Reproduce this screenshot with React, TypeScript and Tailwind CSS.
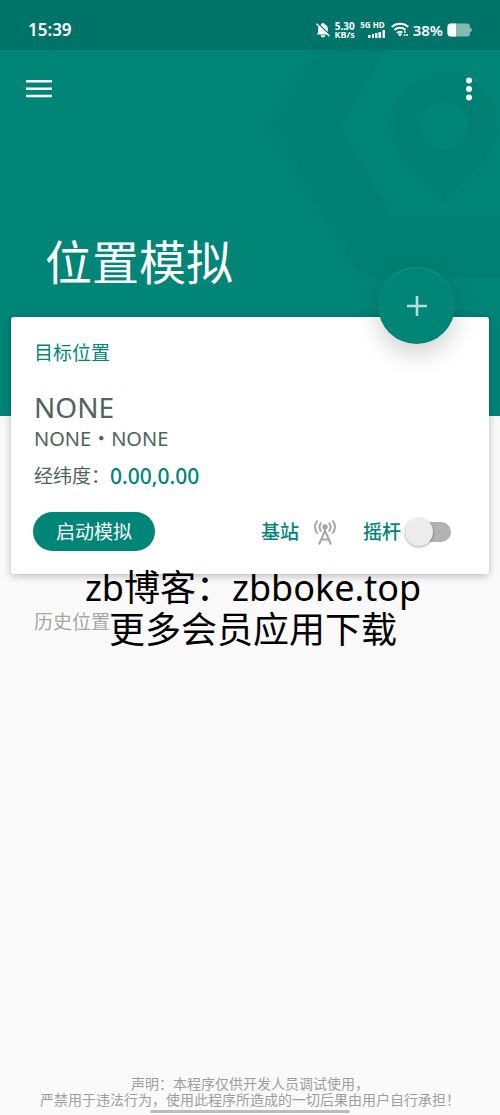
import { useState } from 'react'

function HeaderArt() {
  return (
    <svg className="absolute right-0 top-0 h-[416px] w-[250px]" viewBox="250 0 250 416" fill="none" aria-hidden="true">
      <defs>
        <linearGradient id="edge" gradientUnits="userSpaceOnUse" x1="283" y1="170" x2="299" y2="161">
          <stop offset="0" stopColor="#008072" stopOpacity="0" />
          <stop offset="1" stopColor="#008072" />
        </linearGradient>
        <linearGradient id="edgeTop" gradientUnits="userSpaceOnUse" x1="283" y1="84" x2="299" y2="93">
          <stop offset="0" stopColor="#008072" stopOpacity="0" />
          <stop offset="1" stopColor="#008072" />
        </linearGradient>
      </defs>
      <path d="M264 127h77l52 89h107v62H368q-10 0-15-9z" fill="url(#edge)" />
      <path d="M309 50h77l-45 77h-77z" fill="url(#edgeTop)" />
      <path d="M444 202l-39-39a54 54 0 1 1 78 0zM444 101a24 24 0 1 0 0 48 24 24 0 0 0 0-48z" fill="#008072" fillRule="evenodd" />
    </svg>
  )
}

function StatusBar() {
  return (
    <div className="relative flex h-[50px] items-center justify-between bg-black/12 pl-7 pr-[27px] pt-[9px] text-white">
      <span className="text-[17px] leading-5 font-semibold">15:39</span>
      <div className="flex items-center">
        <svg className="h-4 w-4" viewBox="0 0 16 16" aria-hidden="true">
          <path d="M8 1a1.500 1.500 0 0 1 1.500 1.300A4.800 4.800 0 0 1 12.800 7v3.400L14.200 12.500H1.800l1.400-2.100V7a4.800 4.800 0 0 1 3.300-4.700A1.500 1.500 0 0 1 8 1zM5.800 13.200h4.400a2.200 2.200 0 0 1-4.400 0z" fill="#fff" />
          <path d="M2.500 1l13 12.500" stroke="#007569" strokeWidth="1.500" />
          <path d="M1.500 1.800l13 12.500" stroke="#fff" strokeWidth="1.400" />
        </svg>
        <div className="ml-0.5 flex w-6 flex-col items-center text-[10px] leading-[10px] font-bold">
          <span>5.30</span>
          <span className="text-[9px] leading-2">KB/s</span>
        </div>
        <div className="ml-1 flex w-6 flex-col items-end">
          <span className="text-[8px] leading-2 font-bold whitespace-nowrap">5G HD</span>
          <svg className="mt-px h-2 w-[17px]" viewBox="0 0 17 8" fill="#fff" aria-hidden="true">
            <path d="M0 5h2.500v3H0zM4 4h2v4H4zM7 3h2.500v5H7zM10.500 2h2.500v6h-2.500zM14.500 0H17v8h-2.500z" />
          </svg>
        </div>
        <svg className="ml-1.5 h-[15px] w-[18px]" viewBox="0 0 18 15" fill="none" stroke="#fff" strokeWidth="1.900" aria-hidden="true">
          <path d="M.8 5a12 12 0 0 1 16.400 0M3.500 8a8 8 0 0 1 11 0M6 11a4.500 4.500 0 0 1 5.500-.5" />
          <path d="M9 14.500l-2-2.300a3 3 0 0 1 4 0z" fill="#fff" stroke="none" />
          <path d="M14 9v2M16 12v2M13.500 12v2" strokeWidth="1.500" />
        </svg>
        <span className="ml-1 text-[15px] leading-5 font-semibold">38%</span>
        <svg className="ml-1 h-[14px] w-[26px]" viewBox="0 0 26 14" aria-hidden="true">
          <path d="M4 .5h16a3 3 0 0 1 3 3v1.500q2 0 2 2t-2 2v1.500a3 3 0 0 1-3 3H4a3.500 3.500 0 0 1-3.500-3.500V4A3.500 3.500 0 0 1 4 .5z" fill="#84bab4" />
          <path d="M9 .5H4A3.500 3.500 0 0 0 .5 4v6A3.500 3.500 0 0 0 4 13.500h5z" fill="#fff" />
        </svg>
      </div>
    </div>
  )
}

function TowerIcon() {
  return (
    <svg className="h-7 w-6" viewBox="0 0 24 28" fill="none" stroke="#a6a6a6" strokeWidth="2" aria-hidden="true">
      <circle cx="12" cy="9" r="2.700" fill="#a6a6a6" stroke="none" />
      <path d="M8.200 4.500q-3.400 4.500 0 9M15.800 4.500q3.400 4.500 0 9M4.600 2.500q-5.200 6.500 0 13M19.400 2.500q5.200 6.500 0 13" />
      <path d="M12 11v2M6 26.500l6-14 6 14M8.500 21.500h7" />
    </svg>
  )
}

export default function App() {
  const [joystick, setJoystick] = useState(false)

  return (
    <div className="relative flex min-h-screen flex-col bg-[#fafafa] font-['Noto_Sans','Noto_Sans_CJK_SC',sans-serif]">
      <header className="relative h-[416px] bg-[#008577]">
        <HeaderArt />
        <StatusBar />
        <div className="relative flex items-center justify-between px-[26px] pt-[26px] text-white">
          <button aria-label="菜单">
            <svg className="h-[26px] w-[26px]" viewBox="0 0 26 26" fill="#fff">
              <path d="M0 4h26v2.500H0zM0 11.500h26V14H0zM0 18.700h26v2.500H0z" />
            </svg>
          </button>
          <button aria-label="更多">
            <svg className="h-[26px] w-[10px]" viewBox="0 0 10 26" fill="#fff">
              <circle cx="5" cy="4.500" r="3" />
              <circle cx="5" cy="13" r="3" />
              <circle cx="5" cy="21.500" r="3" />
            </svg>
          </button>
        </div>
        <h1 className="relative mt-[130px] pl-[45px] text-[47px] leading-[60px] text-white">位置模拟</h1>
      </header>

      <section className="relative mx-[11px] -mt-[99px] rounded-[3px] bg-white px-[23px] pt-6 pb-[23px] shadow-[0_2px_8px_rgba(0,0,0,0.25)]">
        <h2 className="text-[19px] leading-6 text-[#008577]">目标位置</h2>
        <p className="mt-6 text-[28px] leading-9 text-[#4f6360]">NONE</p>
        <p className="text-[20px] leading-7 text-[#4f6360]">NONE・NONE</p>
        <p className="mt-[9px] flex items-center text-[19px] leading-7 text-[#4f6360]">
          经纬度：
          <span className="text-[21px] font-medium text-[#008577]">0.00,0.00</span>
        </p>
        <div className="mt-[22px] flex items-center justify-between pr-[15px]">
          <button className="-ml-px h-[39px] rounded-full bg-[#008577] px-[23px] text-[19px] leading-6 text-white">启动模拟</button>
          <div className="flex items-center text-[19px] leading-6 font-medium text-[#008577]">
            <button className="flex items-center gap-[14px]">
              基站
              <TowerIcon />
            </button>
            <label className="ml-[26px] flex items-center gap-1">
              摇杆
              <input
                type="checkbox"
                role="switch"
                checked={joystick}
                onChange={e => setJoystick(e.target.checked)}
                className="flex h-5 w-[46px] appearance-none items-center rounded-full bg-[#b2b2b2] before:size-7 before:rounded-full before:bg-[#ececec] before:shadow-[0_1px_3px_rgba(0,0,0,0.35)] checked:bg-[#80c2bb] checked:before:ml-auto checked:before:bg-[#008577]"
              />
            </label>
          </div>
        </div>
        <button
          aria-label="添加位置"
          className="absolute -top-[50px] right-[34px] flex size-[77px] items-center justify-center rounded-full bg-[#008577] shadow-[0_10px_24px_rgba(0,0,0,0.18),inset_0_1px_0_rgba(255,255,255,0.12)]"
        >
          <svg className="size-5" viewBox="0 0 20 20" stroke="#b9ddd9" strokeWidth="2.600">
            <path d="M10 0v20M0 10h20" />
          </svg>
        </button>
      </section>

      <h2 className="mt-9 pl-[34px] text-[19px] leading-6 text-[#a6a6a6]">历史位置</h2>

      <p className="pointer-events-none absolute inset-x-0 top-[567px] pl-1.5 text-center text-[36px] leading-[42px] text-black">
        zb博客：zbboke.top
        <br />
        更多会员应用下载
      </p>

      <footer className="mt-auto flex flex-col items-center pb-0.5 text-[14px] leading-4 text-[#9e9e9e]">
        <p className="text-center">
          声明：本程序仅供开发人员调试使用，
          <br />
          严禁用于违法行为，使用此程序所造成的一切后果由用户自行承担！
        </p>
        <div className="mt-0.5 h-[3px] w-2/5 rounded-full bg-[#bcbcbc]" />
      </footer>
    </div>
  )
}
